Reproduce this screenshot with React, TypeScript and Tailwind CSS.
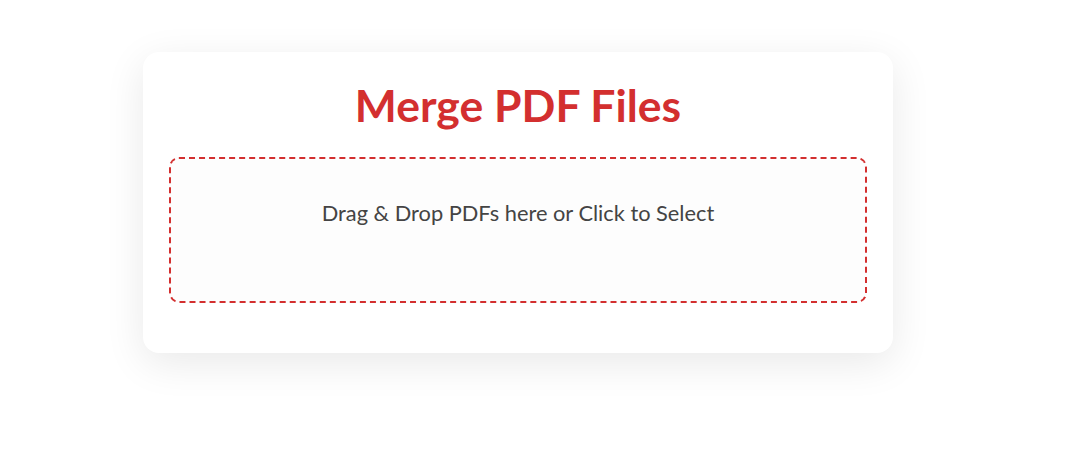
export default function App() {
  return (
    <div
      className="min-h-[454px] w-full bg-white pt-[52px]"
      style={{ fontFamily: "Lato, 'Noto Sans', sans-serif" }}
    >
      <div className="ml-[143px] w-[750px] rounded-2xl bg-white px-[26px] pb-[50px] pt-[24px] shadow-[0_10px_40px_rgba(0,0,0,0.09)]">
        <h1 className="text-center text-[44.5px] font-bold leading-[58px] text-[#d32f2f]">
          Merge PDF Files
        </h1>
        <div className="mt-[23px] flex h-[146px] cursor-pointer justify-center rounded-[10px] border-2 border-dashed border-[#d32f2f] bg-[#fdfdfd] pt-[39px]">
          <p className="text-[21.8px] leading-[30px] text-[#444]">
            Drag &amp; Drop PDFs here or Click to Select
          </p>
        </div>
      </div>
    </div>
  );
}
